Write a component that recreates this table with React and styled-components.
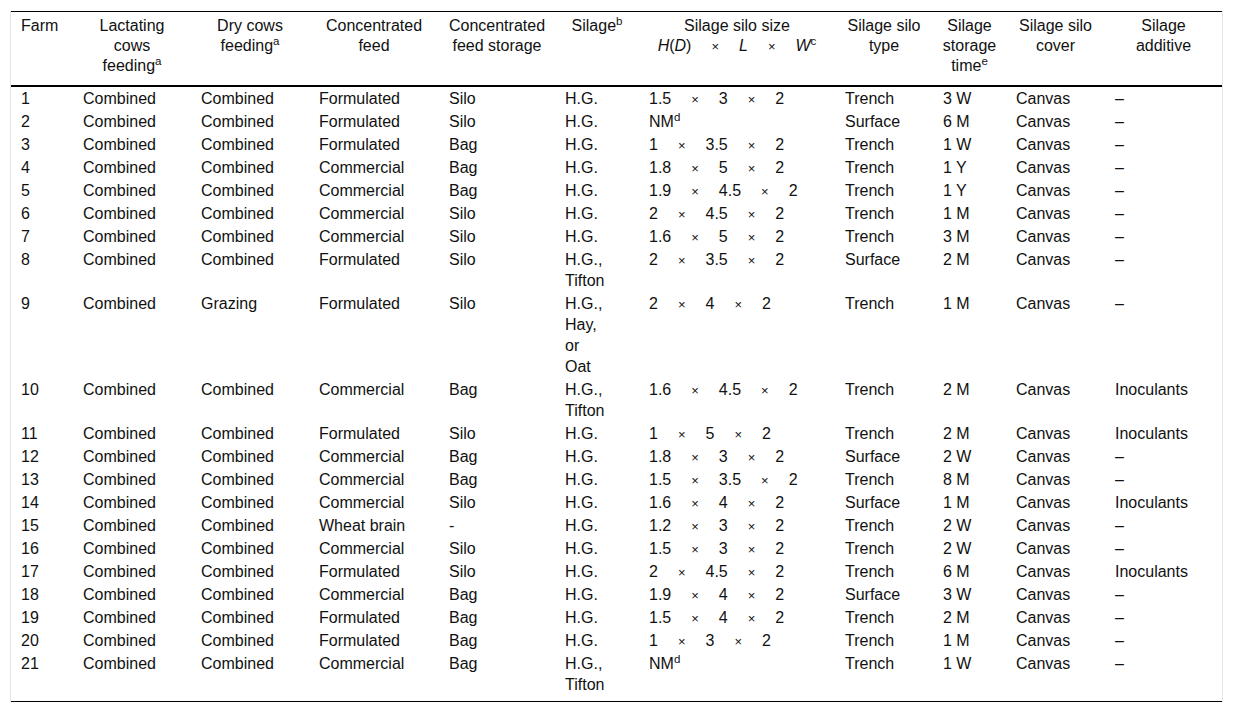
import React from 'react';
import styled, { createGlobalStyle } from 'styled-components';

const GlobalStyle = createGlobalStyle`
  body {
    margin: 0;
    background: #fff;
    font-family: 'Liberation Sans', Arial, sans-serif;
    color: #111;
  }
`;

const Page = styled.div`
  padding: 11px 10px 0 10px;
`;

const Frame = styled.div`
  width: 1211px;
  border-left: 1px solid #e4e4e4;
  border-right: 1px solid #e4e4e4;
`;

const Table = styled.table`
  width: 1211px;
  table-layout: fixed;
  border-collapse: collapse;
  font-size: 16px;
  border-top: 1px solid #000;
  border-bottom: 1px solid #000;
`;

const HeadRow = styled.tr`
  border-bottom: 2px solid #000;
`;

const HeadCell = styled.th`
  font-weight: normal;
  line-height: 20px;
  vertical-align: top;
  text-align: ${p => p.$align || 'center'};
  padding: 4px ${p => (p.$align === 'left' ? '4px' : '6px')} 9px ${p => (p.$align === 'left' ? '10px' : '6px')};
  white-space: nowrap;
`;

const Cell = styled.td`
  line-height: 21px;
  height: 21px;
  vertical-align: top;
  padding: 1px 4px 1px 10px;
  white-space: nowrap;

  tr:last-child > & {
    padding-bottom: 6px;
  }
`;

const Sup = styled.sup`
  font-size: 0.72em;
  line-height: 0;
  vertical-align: 0.55em;
`;

const Times = styled.span`
  display: inline-block;
  font-size: 13px;
  line-height: 0;
  margin: 0 20px;
`;

const Var = styled.i`
  font-style: italic;
`;

const widths = [62, 118, 118, 130, 116, 84, 196, 98, 73, 99, 117];

const rows = [
  ['1', 'Combined', 'Combined', 'Formulated', 'Silo', ['H.G.'], ['1.5', '3', '2'], 'Trench', '3 W', 'Canvas', '–'],
  ['2', 'Combined', 'Combined', 'Formulated', 'Silo', ['H.G.'], 'NM', 'Surface', '6 M', 'Canvas', '–'],
  ['3', 'Combined', 'Combined', 'Formulated', 'Bag', ['H.G.'], ['1', '3.5', '2'], 'Trench', '1 W', 'Canvas', '–'],
  ['4', 'Combined', 'Combined', 'Commercial', 'Bag', ['H.G.'], ['1.8', '5', '2'], 'Trench', '1 Y', 'Canvas', '–'],
  ['5', 'Combined', 'Combined', 'Commercial', 'Bag', ['H.G.'], ['1.9', '4.5', '2'], 'Trench', '1 Y', 'Canvas', '–'],
  ['6', 'Combined', 'Combined', 'Commercial', 'Silo', ['H.G.'], ['2', '4.5', '2'], 'Trench', '1 M', 'Canvas', '–'],
  ['7', 'Combined', 'Combined', 'Commercial', 'Silo', ['H.G.'], ['1.6', '5', '2'], 'Trench', '3 M', 'Canvas', '–'],
  ['8', 'Combined', 'Combined', 'Formulated', 'Silo', ['H.G.,', 'Tifton'], ['2', '3.5', '2'], 'Surface', '2 M', 'Canvas', '–'],
  ['9', 'Combined', 'Grazing', 'Formulated', 'Silo', ['H.G.,', 'Hay,', 'or', 'Oat'], ['2', '4', '2'], 'Trench', '1 M', 'Canvas', '–'],
  ['10', 'Combined', 'Combined', 'Commercial', 'Bag', ['H.G.,', 'Tifton'], ['1.6', '4.5', '2'], 'Trench', '2 M', 'Canvas', 'Inoculants'],
  ['11', 'Combined', 'Combined', 'Formulated', 'Silo', ['H.G.'], ['1', '5', '2'], 'Trench', '2 M', 'Canvas', 'Inoculants'],
  ['12', 'Combined', 'Combined', 'Commercial', 'Bag', ['H.G.'], ['1.8', '3', '2'], 'Surface', '2 W', 'Canvas', '–'],
  ['13', 'Combined', 'Combined', 'Commercial', 'Bag', ['H.G.'], ['1.5', '3.5', '2'], 'Trench', '8 M', 'Canvas', '–'],
  ['14', 'Combined', 'Combined', 'Commercial', 'Silo', ['H.G.'], ['1.6', '4', '2'], 'Surface', '1 M', 'Canvas', 'Inoculants'],
  ['15', 'Combined', 'Combined', 'Wheat brain', '-', ['H.G.'], ['1.2', '3', '2'], 'Trench', '2 W', 'Canvas', '–'],
  ['16', 'Combined', 'Combined', 'Commercial', 'Silo', ['H.G.'], ['1.5', '3', '2'], 'Trench', '2 W', 'Canvas', '–'],
  ['17', 'Combined', 'Combined', 'Formulated', 'Silo', ['H.G.'], ['2', '4.5', '2'], 'Trench', '6 M', 'Canvas', 'Inoculants'],
  ['18', 'Combined', 'Combined', 'Commercial', 'Bag', ['H.G.'], ['1.9', '4', '2'], 'Surface', '3 W', 'Canvas', '–'],
  ['19', 'Combined', 'Combined', 'Formulated', 'Bag', ['H.G.'], ['1.5', '4', '2'], 'Trench', '2 M', 'Canvas', '–'],
  ['20', 'Combined', 'Combined', 'Formulated', 'Bag', ['H.G.'], ['1', '3', '2'], 'Trench', '1 M', 'Canvas', '–'],
  ['21', 'Combined', 'Combined', 'Commercial', 'Bag', ['H.G.,', 'Tifton'], 'NM', 'Trench', '1 W', 'Canvas', '–'],
];

const Lines = ({ items }) =>
  items.map((line, i) => (
    <React.Fragment key={i}>
      {i > 0 && <br />}
      {line}
    </React.Fragment>
  ));

const Size = ({ value }) => {
  if (value === 'NM') {
    return (
      <>
        NM<Sup>d</Sup>
      </>
    );
  }
  const [h, l, w] = value;
  return (
    <>
      {h}
      <Times>×</Times>
      {l}
      <Times>×</Times>
      {w}
    </>
  );
};

const App = () => (
  <>
    <GlobalStyle />
    <Page>
      <Frame>
        <Table>
          <colgroup>
            {widths.map((w, i) => (
              <col key={i} style={{ width: w }} />
            ))}
          </colgroup>
          <thead>
            <HeadRow>
              <HeadCell $align="left">Farm</HeadCell>
              <HeadCell>
                Lactating
                <br />
                cows
                <br />
                feeding<Sup>a</Sup>
              </HeadCell>
              <HeadCell>
                Dry cows
                <br />
                feeding<Sup>a</Sup>
              </HeadCell>
              <HeadCell>
                Concentrated
                <br />
                feed
              </HeadCell>
              <HeadCell>
                Concentrated
                <br />
                feed storage
              </HeadCell>
              <HeadCell>
                Silage<Sup>b</Sup>
              </HeadCell>
              <HeadCell>
                Silage silo size
                <br />
                <Var>H</Var>(<Var>D</Var>)<Times>×</Times>
                <Var>L</Var>
                <Times>×</Times>
                <Var>W</Var>
                <Sup>c</Sup>
              </HeadCell>
              <HeadCell>
                Silage silo
                <br />
                type
              </HeadCell>
              <HeadCell>
                Silage
                <br />
                storage
                <br />
                time<Sup>e</Sup>
              </HeadCell>
              <HeadCell>
                Silage silo
                <br />
                cover
              </HeadCell>
              <HeadCell>
                Silage
                <br />
                additive
              </HeadCell>
            </HeadRow>
          </thead>
          <tbody>
            {rows.map(row => (
              <tr key={row[0]}>
                {row.map((value, i) => (
                  <Cell key={i}>
                    {i === 5 ? <Lines items={value} /> : i === 6 ? <Size value={value} /> : value}
                  </Cell>
                ))}
              </tr>
            ))}
          </tbody>
        </Table>
      </Frame>
    </Page>
  </>
);

export default App;
